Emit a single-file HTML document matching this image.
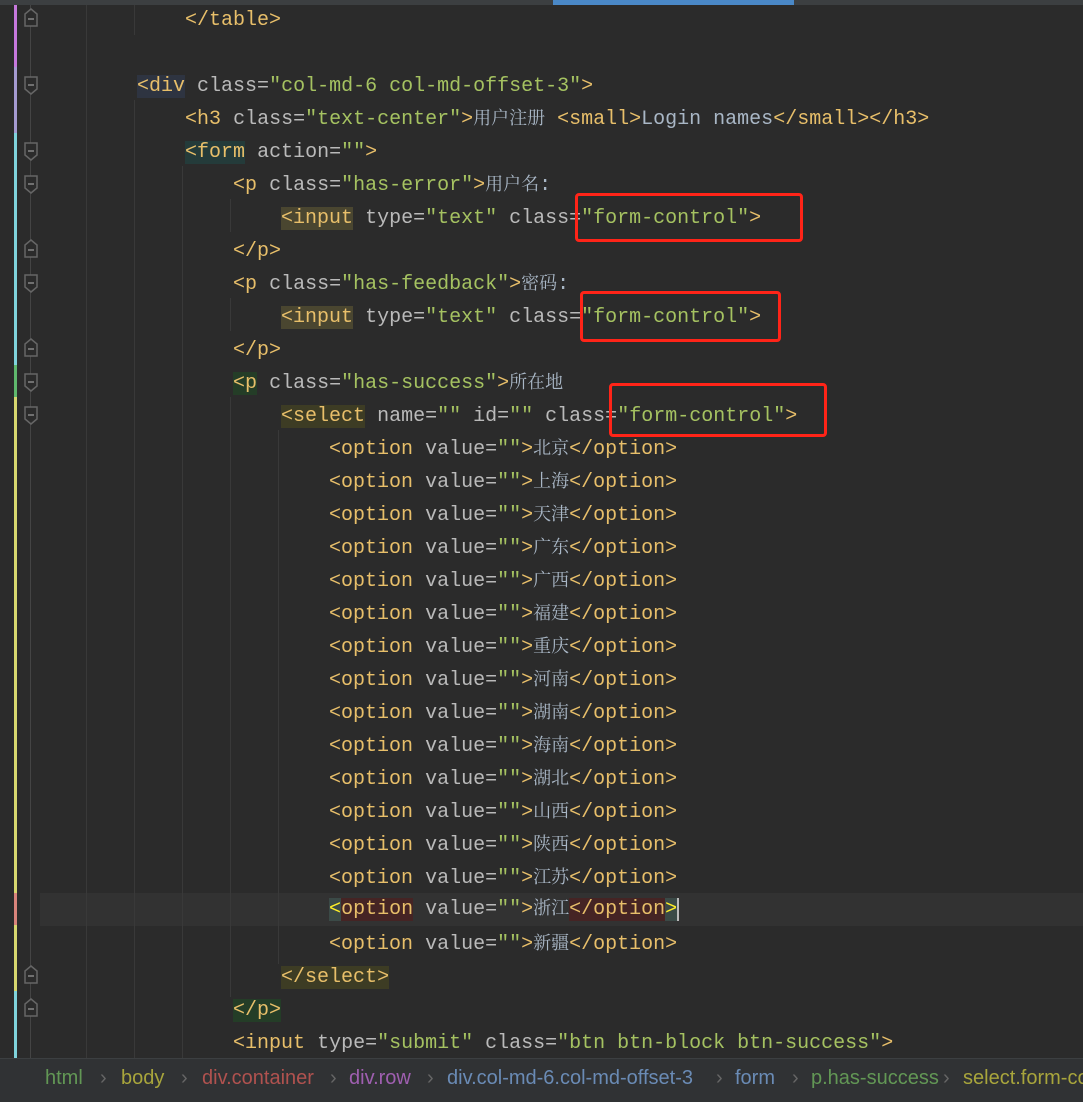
<!DOCTYPE html>
<html><head><meta charset="utf-8"><style>
body{margin:0;width:1083px;height:1101px;background:#2b2b2b;overflow:hidden;position:relative;font-family:"Liberation Mono","Noto Sans CJK SC",monospace;}
.w{position:absolute;left:0;top:2px;width:1083px;height:1056px}
.l{position:absolute;left:41px;height:33px;line-height:33px;font-size:20px;white-space:pre;color:#a9b7c6;overflow:hidden}
.t{color:#e8bf6a}.a{color:#bababa}.s{color:#a5c261}.c{font-family:"Noto Serif CJK SC","Noto Sans CJK SC",serif;font-size:18px;color:#a9b7c6;line-height:0}
.g{position:absolute;width:1px;background:#393939}
.box{position:absolute;border:3px solid #ff2418;border-radius:4px}
.bc{position:absolute;top:1058px;left:0;width:1083px;height:43px;background:#303234;border-top:1px solid #3c3f41;font-family:"Liberation Sans",sans-serif;font-size:20px;line-height:38px;white-space:nowrap;overflow:hidden}
.bc span{position:absolute}
.sep{color:#666}
</style></head><body>
<div style="position:absolute;top:0;left:0;width:1083px;height:5px;background:#3c3f41"></div>
<div style="position:absolute;top:0;left:553px;width:241px;height:5px;background:#4a88c7"></div>
<div style="position:absolute;top:893px;left:40px;width:1043px;height:33px;background:#323232"></div>
<div style="position:absolute;left:14px;top:5px;width:3px;height:62px;background:#c678dd"></div>
<div style="position:absolute;left:14px;top:67px;width:3px;height:66px;background:#a59bd1"></div>
<div style="position:absolute;left:14px;top:133px;width:3px;height:232px;background:#7fd3dc"></div>
<div style="position:absolute;left:14px;top:365px;width:3px;height:32px;background:#5fb86d"></div>
<div style="position:absolute;left:14px;top:397px;width:3px;height:496px;background:#d7d76f"></div>
<div style="position:absolute;left:14px;top:893px;width:3px;height:32px;background:#d9847c"></div>
<div style="position:absolute;left:14px;top:925px;width:3px;height:66px;background:#d7d76f"></div>
<div style="position:absolute;left:14px;top:991px;width:3px;height:67px;background:#7fd3dc"></div>
<div class="g" style="left:30px;top:5px;height:1053px;background:#444"></div>
<svg style="position:absolute;left:0;top:0" width="60" height="1058">
<g fill="#2b2b2b" stroke="#666" stroke-width="1.5">
<path d="M25 26V14l6-5 6 5v12z"/><path d="M25 77v12l6 5 6-5V77z"/><path d="M25 143v12l6 5 6-5v-12z"/><path d="M25 176v12l6 5 6-5v-12z"/>
<path d="M25 257v-12l6-5 6 5v12z"/><path d="M25 275v12l6 5 6-5v-12z"/><path d="M25 356v-12l6-5 6 5v12z"/><path d="M25 374v12l6 5 6-5v-12z"/><path d="M25 407v12l6 5 6-5v-12z"/>
<path d="M25 983v-12l6-5 6 5v12z"/><path d="M25 1016v-12l6-5 6 5v12z"/>
</g>
<g stroke="#888" stroke-width="1.5"><path d="M28 19h6M28 85h6M28 151h6M28 184h6M28 250h6M28 283h6M28 349h6M28 382h6M28 415h6M28 976h6M28 1009h6"/></g>
</svg>
<div class="g" style="left:86px;top:5px;height:1053px"></div>
<div class="g" style="left:134px;top:5px;height:30px"></div>
<div class="g" style="left:134px;top:100px;height:958px"></div>
<div class="g" style="left:182px;top:166px;height:892px"></div>
<div class="g" style="left:230px;top:199px;height:33px"></div>
<div class="g" style="left:230px;top:298px;height:33px"></div>
<div class="g" style="left:230px;top:397px;height:600px"></div>
<div class="g" style="left:278px;top:430px;height:534px"></div>
<div class="w">
<div class="l" style="top:2px">            <span class="t">&lt;/table&gt;</span></div>
<div class="l" style="top:68px">        <span class="t" style="background:#2e3441">&lt;div</span> <span class="a">class=</span><span class="s">"col-md-6 col-md-offset-3"</span><span class="t">&gt;</span></div>
<div class="l" style="top:101px">            <span class="t">&lt;h3</span> <span class="a">class=</span><span class="s">"text-center"</span><span class="t">&gt;</span><span class="c">用户注册</span> <span class="t">&lt;small&gt;</span>Login names<span class="t">&lt;/small&gt;&lt;/h3&gt;</span></div>
<div class="l" style="top:134px">            <span class="t" style="background:#243b3a">&lt;form</span> <span class="a">action=</span><span class="s">""</span><span class="t">&gt;</span></div>
<div class="l" style="top:167px">                <span class="t">&lt;p</span> <span class="a">class=</span><span class="s">"has-error"</span><span class="t">&gt;</span><span class="c">用户名</span>:</div>
<div class="l" style="top:200px">                    <span class="t" style="background:#4a4630">&lt;input</span> <span class="a">type=</span><span class="s">"text"</span> <span class="a">class=</span><span class="s">"form-control"</span><span class="t">&gt;</span></div>
<div class="l" style="top:233px">                <span class="t">&lt;/p&gt;</span></div>
<div class="l" style="top:266px">                <span class="t">&lt;p</span> <span class="a">class=</span><span class="s">"has-feedback"</span><span class="t">&gt;</span><span class="c">密码</span>:</div>
<div class="l" style="top:299px">                    <span class="t" style="background:#4a4630">&lt;input</span> <span class="a">type=</span><span class="s">"text"</span> <span class="a">class=</span><span class="s">"form-control"</span><span class="t">&gt;</span></div>
<div class="l" style="top:332px">                <span class="t">&lt;/p&gt;</span></div>
<div class="l" style="top:365px">                <span class="t" style="background:#243d27">&lt;p</span> <span class="a">class=</span><span class="s">"has-success"</span><span class="t">&gt;</span><span class="c">所在地</span></div>
<div class="l" style="top:398px">                    <span class="t" style="background:#3d3c24">&lt;select</span> <span class="a">name=</span><span class="s">""</span> <span class="a">id=</span><span class="s">""</span> <span class="a">class=</span><span class="s">"form-control"</span><span class="t">&gt;</span></div>
<div class="l" style="top:431px">                        <span class="t">&lt;option</span> <span class="a">value=</span><span class="s">""</span><span class="t">&gt;</span><span class="c">北京</span><span class="t">&lt;/option&gt;</span></div>
<div class="l" style="top:464px">                        <span class="t">&lt;option</span> <span class="a">value=</span><span class="s">""</span><span class="t">&gt;</span><span class="c">上海</span><span class="t">&lt;/option&gt;</span></div>
<div class="l" style="top:497px">                        <span class="t">&lt;option</span> <span class="a">value=</span><span class="s">""</span><span class="t">&gt;</span><span class="c">天津</span><span class="t">&lt;/option&gt;</span></div>
<div class="l" style="top:530px">                        <span class="t">&lt;option</span> <span class="a">value=</span><span class="s">""</span><span class="t">&gt;</span><span class="c">广东</span><span class="t">&lt;/option&gt;</span></div>
<div class="l" style="top:563px">                        <span class="t">&lt;option</span> <span class="a">value=</span><span class="s">""</span><span class="t">&gt;</span><span class="c">广西</span><span class="t">&lt;/option&gt;</span></div>
<div class="l" style="top:596px">                        <span class="t">&lt;option</span> <span class="a">value=</span><span class="s">""</span><span class="t">&gt;</span><span class="c">福建</span><span class="t">&lt;/option&gt;</span></div>
<div class="l" style="top:629px">                        <span class="t">&lt;option</span> <span class="a">value=</span><span class="s">""</span><span class="t">&gt;</span><span class="c">重庆</span><span class="t">&lt;/option&gt;</span></div>
<div class="l" style="top:662px">                        <span class="t">&lt;option</span> <span class="a">value=</span><span class="s">""</span><span class="t">&gt;</span><span class="c">河南</span><span class="t">&lt;/option&gt;</span></div>
<div class="l" style="top:695px">                        <span class="t">&lt;option</span> <span class="a">value=</span><span class="s">""</span><span class="t">&gt;</span><span class="c">湖南</span><span class="t">&lt;/option&gt;</span></div>
<div class="l" style="top:728px">                        <span class="t">&lt;option</span> <span class="a">value=</span><span class="s">""</span><span class="t">&gt;</span><span class="c">海南</span><span class="t">&lt;/option&gt;</span></div>
<div class="l" style="top:761px">                        <span class="t">&lt;option</span> <span class="a">value=</span><span class="s">""</span><span class="t">&gt;</span><span class="c">湖北</span><span class="t">&lt;/option&gt;</span></div>
<div class="l" style="top:794px">                        <span class="t">&lt;option</span> <span class="a">value=</span><span class="s">""</span><span class="t">&gt;</span><span class="c">山西</span><span class="t">&lt;/option&gt;</span></div>
<div class="l" style="top:827px">                        <span class="t">&lt;option</span> <span class="a">value=</span><span class="s">""</span><span class="t">&gt;</span><span class="c">陕西</span><span class="t">&lt;/option&gt;</span></div>
<div class="l" style="top:860px">                        <span class="t">&lt;option</span> <span class="a">value=</span><span class="s">""</span><span class="t">&gt;</span><span class="c">江苏</span><span class="t">&lt;/option&gt;</span></div>
<div class="l" style="top:891px">                        <span class="t" style="background:#3b4a47;color:#ffef28">&lt;</span><span class="t" style="background:#452424">option</span> <span class="a">value=</span><span class="s">""</span><span class="t">&gt;</span><span class="c">浙江</span><span class="t" style="background:#452424">&lt;/option</span><span class="t" style="background:#3b4a47;color:#ffef28">&gt;</span><span style="border-left:2px solid #bbb"></span></div>
<div class="l" style="top:926px">                        <span class="t">&lt;option</span> <span class="a">value=</span><span class="s">""</span><span class="t">&gt;</span><span class="c">新疆</span><span class="t">&lt;/option&gt;</span></div>
<div class="l" style="top:959px">                    <span class="t" style="background:#3d3c24">&lt;/select&gt;</span></div>
<div class="l" style="top:992px">                <span class="t" style="background:#243d27">&lt;/p&gt;</span></div>
<div class="l" style="top:1025px">                <span class="t">&lt;input</span> <span class="a">type=</span><span class="s">"submit"</span> <span class="a">class=</span><span class="s">"btn btn-block btn-success"</span><span class="t">&gt;</span></div>
</div>
<div class="box" style="left:575px;top:193px;width:222px;height:43px"></div>
<div class="box" style="left:580px;top:291px;width:195px;height:45px"></div>
<div class="box" style="left:609px;top:383px;width:212px;height:48px"></div>

<div class="bc">
<span style="left:45px;color:#629755">html</span><span class="sep" style="left:100px">›</span>
<span style="left:121px;color:#a8a53c">body</span><span class="sep" style="left:181px">›</span>
<span style="left:202px;color:#b0524f">div.container</span><span class="sep" style="left:330px">›</span>
<span style="left:349px;color:#9f5fb0">div.row</span><span class="sep" style="left:427px">›</span>
<span style="left:447px;color:#6a8bb5">div.col-md-6.col-md-offset-3</span><span class="sep" style="left:716px">›</span>
<span style="left:735px;color:#6a8bb5">form</span><span class="sep" style="left:792px">›</span>
<span style="left:811px;color:#629755">p.has-success</span><span class="sep" style="left:943px">›</span>
<span style="left:963px;color:#a8a53c">select.form-control</span>
</div>
</body></html>
